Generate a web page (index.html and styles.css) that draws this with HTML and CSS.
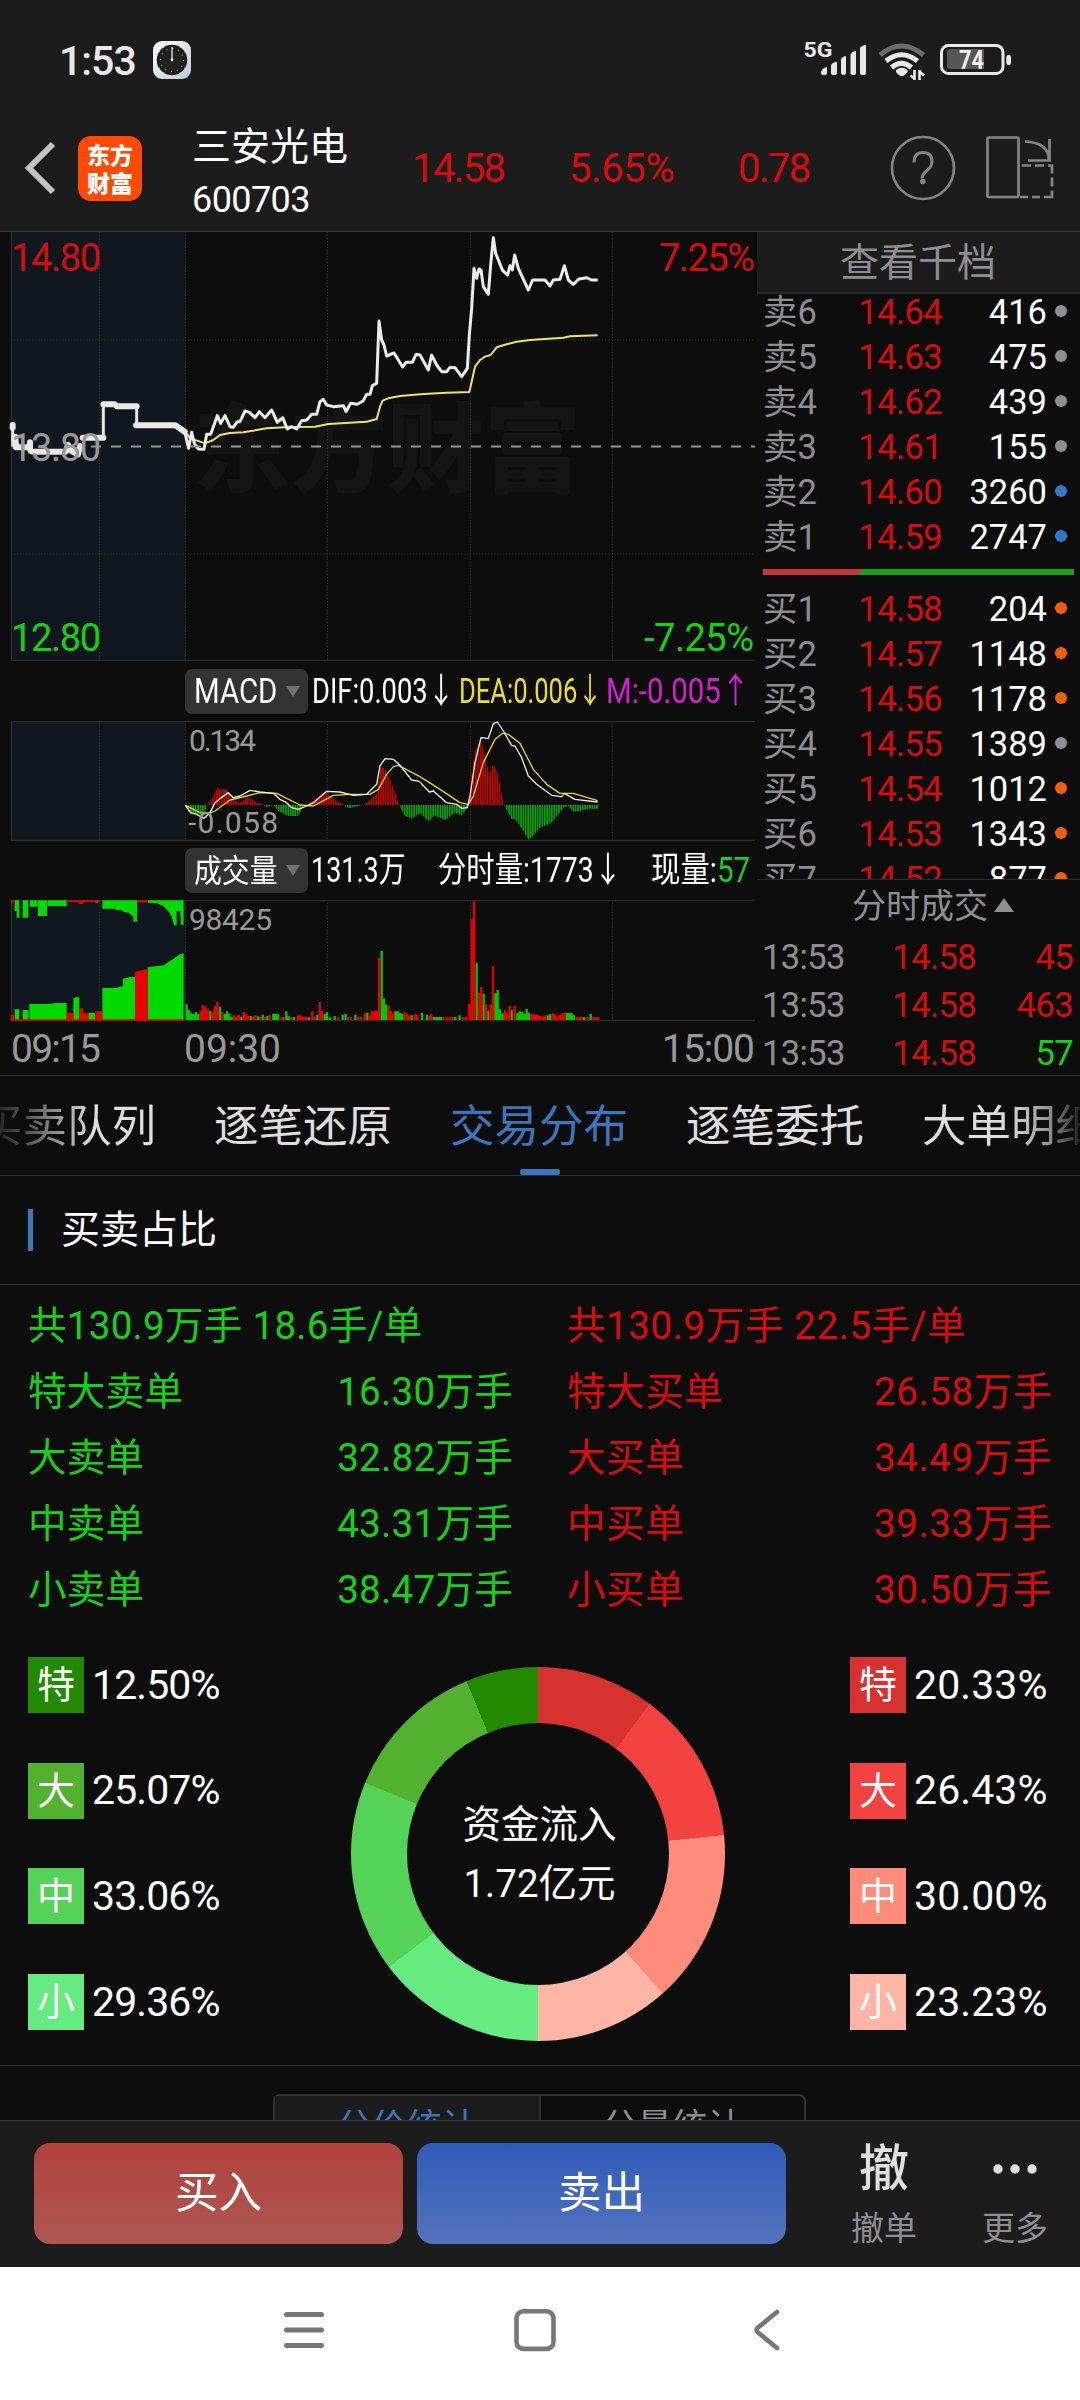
FILE: index.html
```html
<!DOCTYPE html>
<html lang="zh-CN">
<head>
<meta charset="utf-8">
<title>三安光电 600703</title>
<link rel="stylesheet" href="styles.css">
</head>
<body>
<div class="phone">
  <div class="status">
    <span class="time">1:53</span>
    <svg class="clock" width="38" height="38" viewBox="0 0 38 38">
      <defs><linearGradient id="cg" x1="0" y1="0" x2="1" y2="1"><stop offset="0" stop-color="#fff"/><stop offset="1" stop-color="#b9cad8"/></linearGradient></defs>
      <rect width="38" height="38" rx="9" fill="url(#cg)"/>
      <circle cx="19" cy="19" r="14.8" fill="#202020" stroke="#0c0c0c"/>
      <circle cx="19" cy="19" r="11.5" fill="none" stroke="#999" stroke-width="1.4" stroke-dasharray="1 5.02"/>
      <path d="M19 19V6" stroke="#fff" stroke-width="1.2"/><circle cx="19" cy="19" r="1.4" fill="#fff"/>
    </svg>
    <svg class="signals" width="218" height="54" viewBox="796 34 218 54">
      <text x="803.5" y="57" font-size="21" font-weight="700" fill="#e8e8e8" textLength="29" lengthAdjust="spacingAndGlyphs">5G</text>
      <g fill="#e8e8e8">
        <path d="M821 73v-1q1-4 6-5v6q0 2-3 2t-3-2zM831 73v-8q2-3 6-3v11q0 2-3 2t-3-2zM841 73v-14q2-3 5-3v17q0 2-2.500 2t-2.500-2zM850.500 73v-19q2-3 5.500-3v22q0 2-2.800 2t-2.700-2zM860 73v-25q2-3 6-3v28q0 2-3 2t-3-2z"/>
        <path d="M896 70q5.800-4.600 11.600 0v2q-3 4-5.800 4.500q-3-.5-5.800-4.500z"/>
      </g>
      <g fill="none" stroke="#e8e8e8" stroke-width="5">
        <path d="M880 55Q901.500 37 923.500 55" stroke="#6c6c6c"/>
        <path d="M886 61Q901.500 48.500 917.500 61"/><path d="M891.500 67.500Q901.500 59 911.500 67.500"/>
        <path d="M914.500 70v10M919.500 80v-10" stroke-width="2.600"/><path d="M910.500 75.500l4 3M919.500 71.500l4.500 4" stroke-width="2.500"/>
      </g>
      <rect x="941.500" y="45.500" width="61.500" height="28" rx="7" fill="none" stroke="#e8e8e8" stroke-width="3"/>
      <path d="M947 52q0-3 3-3h34v20h-34q-3 0-3-3z" fill="#565656"/>
      <rect x="1006.300" y="55" width="4.700" height="10" rx="2" fill="#e8e8e8"/>
      <text x="959" y="68.500" font-size="25" font-weight="700" fill="#f0f0f0" textLength="25" lengthAdjust="spacingAndGlyphs">74</text>
    </svg>
  </div>

  <header class="head">
    <svg class="back" width="34" height="56" viewBox="0 0 34 56"><path d="M29 4L5 28L29 52" fill="none" stroke="#c4c4c4" stroke-width="6"/></svg>
    <div class="logo"><span>东方</span><span>财富</span></div>
    <div class="names"><div class="nm">三安光电</div><div class="code">600703</div></div>
    <div class="quote q1">14.58</div><div class="quote q2">5.65%</div><div class="quote q3">0.78</div>
    <svg class="help" width="66" height="66" viewBox="0 0 66 66" fill="none" stroke="#858585">
      <circle cx="33" cy="33" r="31" stroke-width="2.600"/>
      <path d="M24 27.500q0-10 9-10t9 9q0 5-5 9t-4.800 8" stroke-width="3"/><circle cx="32.800" cy="46.500" r="2.800" fill="#858585" stroke="none"/>
    </svg>
    <svg class="rotate" width="70" height="66" viewBox="987 135 70 66" fill="none" stroke="#858585" stroke-width="2.700">
      <rect x="989.500" y="137.500" width="31" height="59.500" rx="1.500"/>
      <path d="M1027 141.500q24 1 24 19M1051.500 139v21.500h-21.500"/>
      <path d="M1024 165.500h9m4 0h9m4 0h4v8m0 4v9m0 4v6.500h-8m-4 0h-8m-4 0h-8"/>
    </svg>
  </header>

  <main class="market">
    <section class="charts">
      <svg class="price" width="757" height="430" viewBox="0 231 757 430">
        <rect x="11" y="232" width="174" height="428" fill="#10171e"/>
        <text class="mark" x="193" y="484" textLength="388">东方财富</text>
        <path class="grid" d="M99.500 232V660M185.500 232V660M327.500 232V660M470.500 232V660M612.500 232V660M11 340H755M11 554H755"/>
        <path class="edge" d="M11.500 232V660M11 660.500H755"/>
        <g transform="translate(0 225) scale(.33333)" fill="none" stroke-linejoin="round">
          <path d="M38 600V665M310 640V538M410 543V600" stroke="#e8e8e8" stroke-width="9"/>
          <path d="M38 600v8M46 635l2 32h38M90 652v20q0 8 12 8h96l6-20 10 18 20 10 6-25M248 638h62M310 538h35l6 6h59M408 601h118l16 11 12 8" stroke="#e8e8e8" stroke-width="18" stroke-linecap="round"/>
          <path stroke="#f0e070" stroke-width="6" d="M556 620L570 640 600 650 615 655 640 645 660 630 690 624 730 622 800 610 870 606 945 605 985 597 1100 590 1130 582 1140 545 1148 527 1165 520 1200 513 1270 507 1340 503 1408 501 1415 470 1425 425 1440 405 1455 395 1472 390 1490 367 1520 358 1550 350 1590 345 1690 338 1710 334 1793 331"/>
          <path stroke="#ececec" stroke-width="9" d="M554 620L566 670 575 622 583 655 595 672 612 673 620 628 632 628 652 572 662 595 675 572 690 605 700 607 712 590 720 590 735 558 748 562 765 578 778 560 795 578 815 555 832 592 848 578 862 612 875 605 890 612 905 587 920 585 935 568 950 568 960 530 970 523 980 540 1000 545 1030 542 1038 560 1052 535 1072 538 1090 527 1100 508 1110 508 1117 482 1130 475 1137 288 1145 345 1152 360 1160 393 1182 384 1208 426 1218 412 1237 412 1248 388 1260 390 1285 435 1295 390 1310 420 1325 440 1340 440 1350 427 1365 428 1385 455 1402 430 1408 330 1415 250 1422 130 1430 160 1437 132 1443 135 1450 185 1465 208 1472 120 1480 38 1487 85 1508 137 1523 150 1530 122 1537 135 1544 90 1555 130 1585 195 1598 165 1635 165 1650 183 1660 165 1680 163 1693 122 1705 165 1720 178 1737 162 1760 158 1775 165 1793 165"/>
        </g>
        <path d="M91 446.500H755" stroke="#969696" stroke-width="2" stroke-dasharray="10 10"/>
        <g font-size="38">
          <text class="up" x="11" y="271" textLength="90">14.80</text>
          <text class="up" x="659" y="271" textLength="96">7.25%</text>
          <text fill="#999" x="11" y="461" textLength="90">13.80</text>
          <text class="down" x="11" y="651" textLength="90">12.80</text>
          <text class="down" x="644" y="651" textLength="110">-7.25%</text>
        </g>
      </svg>
      <div class="legend">
        <div class="pill"><span class="fit p1">MACD</span><i></i></div>
        <span class="fit dif">DIF:0.003<b>↓</b></span><span class="fit dea">DEA:0.006<b>↓</b></span><span class="fit mm">M:-0.005<b>↑</b></span>
      </div>
      <svg class="macd" width="757" height="120" viewBox="0 720 757 120">
        <defs>
          <pattern id="rs" width="7.125" height="20" x="556" y="0" patternUnits="userSpaceOnUse"><rect width="4.800" height="20" fill="#c80000"/></pattern>
          <pattern id="gs" width="7.125" height="20" x="556" y="0" patternUnits="userSpaceOnUse"><rect width="4.800" height="20" fill="#00a800"/></pattern>
        </defs>
        <rect x="11" y="720" width="174" height="119" fill="#10171e"/>
        <path class="grid" d="M99.500 720V839M185.500 720V839M327.500 720V839M470.500 720V839M612.500 720V839"/>
        <path class="edge" d="M11.500 720V839M11 720.500H755M11 839.500H755"/>
        <g transform="translate(0 655) scale(.33333)">
          <path fill="url(#rs)" d="M622 447L635 430 652 395 662 400 680 400 695 430 720 440 745 423 765 437 790 445V447ZM920 447L945 430 980 405 1000 430 1035 447ZM1092 447L1130 415 1140 335 1152 335 1175 380 1197 447ZM1404 447L1410 400 1423 290 1443 250 1458 310 1468 355 1480 322 1495 360 1512 447Z"/>
          <path fill="url(#gs)" d="M556 447L570 475 612 475 622 447ZM790 447L800 453 820 447 835 465 865 480 895 480 912 447ZM1032 447L1045 457 1090 447ZM1198 447L1212 478 1235 488 1260 470 1288 497 1302 478 1335 492 1365 470 1385 478 1402 455V447ZM1512 447L1535 490 1545 488 1570 525 1587 553 1620 515 1655 500 1690 455 1705 450 1720 467 1740 465 1765 458 1795 458V447Z"/>
          <g fill="none" stroke-width="4" stroke-linejoin="round">
            <path stroke="#e3d51c" d="M556 448L600 470 625 473 645 465 690 432 740 420 780 410 830 412 900 447 940 450 1000 418 1050 415 1110 415 1135 400 1160 355 1180 332 1195 328 1260 362 1320 400 1380 440 1405 445 1420 420 1450 320 1485 250 1508 232 1525 235 1560 262 1600 340 1640 385 1680 412 1720 412 1793 434"/>
            <path stroke="#ececec" d="M556 448L572 470 590 475 612 487 630 470 645 440 660 428 685 410 700 425 720 420 750 403 780 408 820 412 840 430 860 440 875 455 895 460 920 450 940 440 980 406 1020 408 1060 418 1100 415 1130 385 1140 330 1155 308 1180 310 1200 328 1235 372 1258 376 1288 408 1300 405 1340 440 1370 445 1385 457 1402 455 1410 420 1425 320 1443 245 1465 247 1480 203 1492 198 1510 225 1535 268 1545 270 1565 305 1585 360 1610 385 1655 418 1685 422 1693 412 1725 430 1793 438"/>
          </g>
        </g>
        <g font-size="30" fill="#999"><text x="189" y="750" textLength="67">0.134</text><text x="188" y="832" textLength="90">-0.058</text></g>
      </svg>
      <div class="legend l2">
        <div class="pill"><span class="fit p2">成交量</span><i></i></div>
        <span class="fit v1">131.3万</span><span class="fit v2">分时量:1773<b>↓</b></span><span class="fit v3">现量:<em>57</em></span>
      </div>
      <svg class="vol" width="757" height="177" viewBox="0 899 757 177">
        <rect x="11" y="899" width="174" height="120" fill="#10171e"/>
        <path class="grid" d="M99.500 899V1019M185.500 899V1019M327.500 899V1019M470.500 899V1019M612.500 899V1019"/>
        <path class="edge" d="M11.500 899V1019M11 899.500H755M11 1019.500H755"/>
        <g transform="translate(0 655) scale(.33333)">
          <path fill="#00da00" d="M44 733H58V785H50V765H44ZM68 733H85V785H68ZM90 733H112V752H90ZM114 733H141V780H114ZM143 733H200V750H143ZM286 733H294V740H286ZM307 733V758H346V762H366L370 768 386 770 400 782V797H411V733ZM443 733V740L470 742 490 750 505 765 515 782 522 808H530V765H540L543 806H551V733Z"/>
          <path fill="#00da00" d="M44 1092V1060H58V1092ZM68 1092V1062H85V1092ZM88 1092V1044H150L165 1041H200V1092ZM220 1092V1028L226 1024H238V1092ZM265 1092V1070H285V1092ZM307 1092V996L350 995 369 990V968L390 963H405V1092ZM443 1092V934L490 928 515 912 540 895 551 892V1092Z"/>
          <path fill="#ea0000" d="M32 733H44V738H38V741H32ZM200 733H300V738H250V744H237V738H200ZM411 733H443V739H411ZM32 1092V1076H42V1092ZM200 1092V1070H220V1092ZM238 1092V1057H250V1072H265V1092ZM286 1092V1066H307V1092ZM405 1092V948L443 938V1092ZM32 1090H551V1094H32Z"/>
          <path fill="none" stroke="#00c800" stroke-width="7" d="M560 1092V1045M567 1092V1062M574 1092V1072M581 1092V1074M588 1092V1068M595 1092V1074M631 1092V1066M660 1092V1052M674 1092V1074M681 1092V1066M688 1092V1074M695 1092V1083M724 1092V1083M752 1092V1080M774 1092V1081M788 1092V1077M802 1092V1080M820 1092V1073M827 1092V1073M834 1092V1075M859 1092V1066M866 1092V1081M882 1092V1083M927 1092V1084M952 1092V1076M974 1092V1074M981 1092V1069M990 1092V1084M1004 1092V1080M1028 1092V1076M1037 1092V1074M1066 1092V1076M1102 1092V1070M1145 1092V884M1152 1092V1028M1159 1092V1047M1186 1092V1066M1193 1092V1066M1200 1092V1070M1207 1092V1074M1235 1092V1078M1266 1092V1070M1281 1092V1076M1302 1092V1083M1309 1092V1083M1316 1092V1083M1323 1092V1083M1366 1092V1083M1379 1092V1078M1430 1092V920M1451 1092V1014M1465 1092V1064M1486 1092V1012M1493 1092V1002M1500 1092V1060M1508 1092V1072M1535 1092V1062M1552 1092V1072M1559 1092V1066M1566 1092V1067M1573 1092V1074M1580 1092V1059M1587 1092V1071M1644 1092V1078M1651 1092V1075M1701 1092V1071M1708 1092V1071M1715 1092V1071M1722 1092V1078M1752 1092V1083M1772 1092V1074"/>
          <path fill="none" stroke="#e80000" stroke-width="7" d="M602 1092V1065M609 1092V1047M616 1092V1052M623 1092V1060M638 1092V1067M645 1092V1050M652 1092V1038M667 1092V1067M702 1092V1078M709 1092V1082M717 1092V1076M731 1092V1068M738 1092V1074M745 1092V1080M759 1092V1083M766 1092V1078M781 1092V1083M795 1092V1083M809 1092V1076M845 1092V1083M852 1092V1083M874 1092V1083M893 1092V1078M900 1092V1078M907 1092V1083M914 1092V1083M921 1092V1083M937 1092V1066M944 1092V1082M959 1092V1038M966 1092V1065M1014 1092V1083M1043 1092V1083M1052 1092V1083M1074 1092V1083M1083 1092V1083M1095 1092V1072M1109 1092V1078M1116 1092V1066M1123 1092V1066M1130 1092V1064M1137 1092V905M1166 1092V1049M1173 1092V1064M1180 1092V1072M1214 1092V1069M1222 1092V1075M1229 1092V1080M1245 1092V1075M1252 1092V1076M1288 1092V1080M1294 1092V1074M1330 1092V1083M1340 1092V1083M1350 1092V1083M1358 1092V1083M1390 1092V1083M1398 1092V1083M1408 1092V1043M1415 1092V790M1422 1092V736M1437 1092V1010M1444 1092V993M1458 1092V1045M1472 1092V1045M1479 1092V930M1515 1092V1063M1521 1092V1070M1529 1092V1050M1544 1092V1049M1594 1092V1075M1601 1092V1075M1608 1092V1075M1615 1092V1078M1622 1092V1080M1630 1092V1082M1637 1092V1078M1658 1092V1071M1665 1092V1075M1672 1092V1081M1680 1092V1076M1687 1092V1072M1694 1092V1071M1730 1092V1083M1738 1092V1083M1745 1092V1083M1762 1092V1083M1780 1092V1083M1788 1092V1083M1794 1092V1083"/>
        </g>
        <text x="189" y="929" font-size="30" fill="#999" textLength="83">98425</text>
        <g font-size="39" fill="#999"><text x="11" y="1061" textLength="90">09:15</text><text x="184" y="1061" textLength="97">09:30</text><text x="662" y="1061" textLength="93">15:00</text></g>
      </svg>
    </section>

    <aside class="book">
      <div class="book-head">查看千档</div>
      <div class="depth">
        <div class="lv"><span>卖6</span><span class="pr">14.64</span><span class="qt">416</span><i class="g"></i></div>
        <div class="lv"><span>卖5</span><span class="pr">14.63</span><span class="qt">475</span><i class="g"></i></div>
        <div class="lv"><span>卖4</span><span class="pr">14.62</span><span class="qt">439</span><i class="g"></i></div>
        <div class="lv"><span>卖3</span><span class="pr">14.61</span><span class="qt">155</span><i class="g"></i></div>
        <div class="lv"><span>卖2</span><span class="pr">14.60</span><span class="qt">3260</span><i class="b"></i></div>
        <div class="lv"><span>卖1</span><span class="pr">14.59</span><span class="qt">2747</span><i class="b"></i></div>
        <div class="ratio"></div>
        <div class="lv"><span>买1</span><span class="pr">14.58</span><span class="qt">204</span><i class="o"></i></div>
        <div class="lv"><span>买2</span><span class="pr">14.57</span><span class="qt">1148</span><i class="o"></i></div>
        <div class="lv"><span>买3</span><span class="pr">14.56</span><span class="qt">1178</span><i class="o"></i></div>
        <div class="lv"><span>买4</span><span class="pr">14.55</span><span class="qt">1389</span><i class="g"></i></div>
        <div class="lv"><span>买5</span><span class="pr">14.54</span><span class="qt">1012</span><i class="o"></i></div>
        <div class="lv"><span>买6</span><span class="pr">14.53</span><span class="qt">1343</span><i class="o"></i></div>
        <div class="lv"><span>买7</span><span class="pr">14.52</span><span class="qt">877</span><i class="o"></i></div>
      </div>
      <div class="deals">
        <div class="deals-head">分时成交<i></i></div>
        <div class="deal"><span>13:53</span><span class="up">14.58</span><span class="up">45</span></div>
        <div class="deal"><span>13:53</span><span class="up">14.58</span><span class="up">463</span></div>
        <div class="deal"><span>13:53</span><span class="up">14.58</span><span class="down">57</span></div>
      </div>
    </aside>
  </main>

  <nav class="tabs"><a>买卖队列</a><a>逐笔还原</a><a class="on">交易分布</a><a>逐笔委托</a><a>大单明细</a></nav>

  <h2 class="title">买卖占比</h2>

  <section class="dist">
    <div class="col down">
      <p class="sum">共130.9万手 18.6手/单</p>
      <p><span>特大卖单</span><span>16.30万手</span></p>
      <p><span>大卖单</span><span>32.82万手</span></p>
      <p><span>中卖单</span><span>43.31万手</span></p>
      <p><span>小卖单</span><span>38.47万手</span></p>
    </div>
    <div class="col up">
      <p class="sum">共130.9万手 22.5手/单</p>
      <p><span>特大买单</span><span>26.58万手</span></p>
      <p><span>大买单</span><span>34.49万手</span></p>
      <p><span>中买单</span><span>39.33万手</span></p>
      <p><span>小买单</span><span>30.50万手</span></p>
    </div>
  </section>

  <section class="flow">
    <ul>
      <li><b class="s1">特</b>12.50%</li><li><b class="s2">大</b>25.07%</li><li><b class="s3">中</b>33.06%</li><li><b class="s4">小</b>29.36%</li>
    </ul>
    <div class="ring"><div class="hole"><span>资金流入</span><span>1.72亿元</span></div></div>
    <ul class="buy">
      <li><b class="b1">特</b>20.33%</li><li><b class="b2">大</b>26.43%</li><li><b class="b3">中</b>30.00%</li><li><b class="b4">小</b>23.23%</li>
    </ul>
  </section>

  <section class="stats"><div class="seg"><span class="on">分价统计</span><span>分量统计</span></div></section>

  <footer class="trade">
    <button class="buy-btn">买入</button><button class="sell-btn">卖出</button>
    <div class="act"><strong>撤</strong><span>撤单</span></div>
    <div class="act more"><svg width="48" height="50" viewBox="0 0 48 50" fill="#e0e0e0"><circle cx="7" cy="26" r="4.700"/><circle cx="24" cy="26" r="4.700"/><circle cx="41" cy="26" r="4.700"/></svg><span>更多</span></div>
  </footer>

  <div class="sysnav">
    <svg width="40" height="44" viewBox="0 0 40 44" stroke="#777" stroke-width="5" stroke-linecap="round"><path d="M2.500 6.500h35M2.500 22h35M2.500 37.500h35"/></svg>
    <svg width="42" height="44" viewBox="0 0 42 44" fill="none" stroke="#777" stroke-width="4.600"><rect x="2.500" y="3.300" width="37" height="37.600" rx="7"/></svg>
    <svg width="28" height="44" viewBox="0 0 28 44" fill="none" stroke="#777" stroke-width="4.600" stroke-linecap="round" stroke-linejoin="round"><path d="M25 4L6 19.500Q3 22 6 24.500L25 40"/></svg>
  </div>
</div>
</body>
</html>
```
FILE: styles.css
```css
* { box-sizing: border-box; margin: 0; padding: 0; }
body { background: #0d0d0d; font-family: Roboto, "Noto Sans CJK SC", sans-serif; color: #fff; }
i, em { font-style: normal; }
svg { display: block; flex: none; }
.phone { width: 1080px; height: 2400px; overflow: hidden; display: flex; flex-direction: column; background: #0d0d0d; }
.phone > * { flex: none; }
.up { color: #d80c0c; fill: #d80c0c; }
.down { color: #18d018; fill: #18d018; }

.status { height: 120px; background: #1c1c1c; display: flex; align-items: center; padding: 0 66px 0 59px; }
.time { font-size: 41px; font-weight: 500; line-height: 60px; width: 94px; letter-spacing: -1px; color: #e8e8e8; margin-top: 2px; }
.signals { margin-left: auto; margin-top: 2px; }

.head { height: 112px; background: #1c1c1c; border-bottom: 1px solid #343434; display: flex; align-items: center; padding-bottom: 15px; }
.head > * { flex: none; }
.back { margin-left: 24px; }
.logo { width: 64px; height: 65px; margin-left: 20px; border-radius: 13px; background: #ff4a05; font: 900 23px/28px "Noto Sans CJK SC", sans-serif; display: flex; flex-direction: column; justify-content: center; align-items: center; }
.names { width: 270px; padding-left: 50px; }
.nm { font-size: 39px; line-height: 56px; height: 54px; white-space: nowrap; margin-top: 4px; }
.code { font-size: 36px; line-height: 54px; letter-spacing: -.6px; height: 48px; }
.quote { font-size: 40px; color: #d80c0c; letter-spacing: -1.6px; }
.q1 { width: 157px; } .q2 { width: 169px; letter-spacing: -.4px; } .q3 { width: 152px; }
.rotate { margin-left: 29px; }

.market { display: flex; height: 844px; border-bottom: 1px solid #2a2a2a; }
.charts { width: 757px; height: 844px; }
.price { margin-top: -1px; }
.mark { font-size: 97px; font-weight: 900; fill: #141414; }
.grid { stroke: #2c2e30; stroke-width: 1; stroke-dasharray: 1.500 1.500; fill: none; }
.edge { stroke: #2a2c2e; stroke-width: 1.400; fill: none; }
.legend { height: 60px; padding: 1px 0 0 185px; display: flex; align-items: center; }
.l2 { height: 59px; padding-bottom: 1px; }
.pill { width: 123px; height: 45px; background: #333; border-radius: 7px; display: flex; align-items: center; padding-left: 9px; flex: none; }
.pill i { border: 7px solid transparent; border-top: 11px solid #707070; border-bottom: 0; }
.fit { display: inline-block; white-space: nowrap; font-size: 35px; line-height: 44px; transform-origin: 0 50%; flex: none; }
.fit b { font-weight: 400; }
.p1 { width: 92px; transform: scaleX(.84); }
.p2 { width: 92px; font-size: 32px; transform: scaleX(.87); }
.dif { width: 147px; margin-left: 4px; transform: scaleX(.78); }
.dea { width: 147px; color: #ecdf2c; transform: scaleX(.73); }
.mm { color: #d61fd0; transform: scaleX(.84); }
.v1 { width: 127px; margin-left: 3px; transform: scaleX(.77); }
.v2 { width: 213px; transform: scaleX(.81); }
.v3 { transform: scaleX(.84); }
.v3 em { color: #18d018; }

.book { width: 323px; height: 844px; }
.book-head { height: 62px; background: #1c1c1c; border-bottom: 2px solid #2a2a2a; color: #8e8e93; font-size: 39px; line-height: 63px; padding-left: 83px; }
.depth { height: 585px; overflow: hidden; padding-left: 6px; }
.lv { height: 45px; line-height: 36px; font-size: 34.500px; color: #8e8e93; display: grid; grid-template-columns: 60px 119px 105px 12px; align-items: start; column-gap: 0; }
.lv span { white-space: nowrap; }
.lv .pr { color: #d80c0c; text-align: right; letter-spacing: -.6px; }
.lv .qt { color: #fff; text-align: right; }
.lv i { width: 12px; height: 12px; border-radius: 50%; margin: 11px 0 0 8px; }
.g { background: #8e8e93; } .b { background: #3478c8; } .o { background: #f0600c; }
.ratio { height: 6px; width: 311px; margin: 5px 0 16px 0; background: linear-gradient(135deg, #c23838 0 70px, #1c9c1c 71px); }
.deals { border-top: 1px solid #2a2a2a; color: #8e8e93; }
.deals-head { height: 53px; line-height: 53px; font-size: 34px; padding-left: 95px; display: flex; align-items: center; }
.deals-head i { border: 10px solid transparent; border-bottom: 14px solid #8e8e93; border-top: 0; margin: -3px 0 0 6px; }
.deal { height: 48px; line-height: 48px; font-size: 34.500px; display: grid; grid-template-columns: 92px 122px 1fr; padding: 0 7px 0 5px; letter-spacing: -.6px; }
.deal span + span { text-align: right; }

.tabs { height: 100px; border-bottom: 1px solid #2f2f2f; display: flex; gap: 58px; padding-left: 0; width: 1080px; overflow: hidden; font-size: 44.500px; line-height: 102px; color: #dedede; }
.tabs a { flex: none; width: 178px; white-space: nowrap; position: relative; height: 99px; }
.tabs a:first-child { margin-left: -22px; background: linear-gradient(90deg, #2a2a2a 22px, #555 50px, #dedede 115px); -webkit-background-clip: text; color: transparent; }
.tabs a:last-child { background: linear-gradient(90deg, #dedede 85px, #999 125px, #222 158px); -webkit-background-clip: text; color: transparent; }
.tabs .on { color: #3b76bf; }
.tabs .on::after { content: ""; position: absolute; left: 70px; bottom: 0; width: 40px; height: 6px; border-radius: 3px; background: #3b76bf; }

.title { height: 109px; border-bottom: 1px solid #2f2f2f; font-size: 39px; font-weight: 400; line-height: 108px; display: flex; align-items: center; padding-left: 28px; gap: 28px; }
.title::before { content: ""; width: 5px; height: 42px; background: #3b76bf; }

.dist { display: flex; gap: 54px; padding: 8px 28px 0; height: 371px; font-size: 38.500px; }
.col { width: 485px; letter-spacing: .3px; }
.col.up { letter-spacing: .6px; }
.col p { display: flex; justify-content: space-between; line-height: 66px; height: 66px; white-space: pre; }

.flow { height: 410px; display: flex; padding: 0 28px 0; border-bottom: 1px solid #333; }
.flow ul { list-style: none; width: 323px; flex: none; display: flex; flex-direction: column; gap: 49.700px; padding-top: 1px; }
.flow .buy { margin-left: 125px; width: 210px; }
.flow li { height: 56px; display: flex; align-items: center; gap: 8px; font-size: 41px; line-height: 57px; letter-spacing: -.9px; white-space: nowrap; }
.flow .buy li { letter-spacing: .1px; }
.flow b { width: 56px; height: 56px; flex: none; text-align: center; font-weight: 400; font-size: 38px; letter-spacing: 0; }
.s1 { background: #228a00; } .s2 { background: #52b12e; } .s3 { background: #55d359; } .s4 { background: #65eb80; }
.b1 { background: #d73230; } .b2 { background: #f34341; } .b3 { background: #ff8c7b; } .b4 { background: #ffb5a5; }
.ring { width: 374px; height: 374px; margin-top: 11px; flex: none; border-radius: 50%; display: grid; place-items: center;
  background: conic-gradient(#d73230 0 10.165%, #f34341 0 23.380%, #ff8c7b 0 38.380%, #ffb5a5 0 50%, #65eb80 0 64.680%, #55d359 0 81.210%, #52b12e 0 93.750%, #228a00 0); }
.hole { width: 262px; height: 262px; border-radius: 50%; background: #0d0d0d; display: flex; flex-direction: column; align-items: center; justify-content: center; font-size: 38.500px; line-height: 59px; padding-left: 3px; }

.stats { height: 54px; overflow: hidden; padding: 28px 0 0 273px; }
.seg { width: 533px; height: 80px; border: 2px solid #333; border-radius: 7px; display: flex; font-size: 35px; line-height: 64px; text-align: center; color: #8e8e93; }
.seg span { flex: 1; }
.seg .on { background: #1c1c1c; color: #3b76bf; border-right: 2px solid #333; }

.trade { height: 147px; background: #1c1c1c; border-top: 1px solid #343434; display: flex; padding: 22px 0 0 34px; gap: 14px; }
.trade button { width: 369px; height: 101px; border: 0; border-radius: 16px; color: #fff; font: 43.500px/101px Roboto, "Noto Sans CJK SC", sans-serif; }
.buy-btn { background: linear-gradient(#b2413d, #ad5753); }
.sell-btn { background: linear-gradient(#2f5bb8, #5373bc); }
.act { width: 70px; margin-left: 49px; display: flex; flex-direction: column; align-items: center; font-size: 33px; color: #8e8e93; }
.act strong { font-size: 50px; line-height: 52px; height: 63px; font-weight: 500; color: #e0e0e0; }
.act svg { height: 50px; margin-bottom: 13px; }
.act span { line-height: 46px; }
.act.more { margin-left: 47px; }

.sysnav { height: 134px; background: #fff; display: flex; align-items: center; padding: 0 0 9px 284px; }
.sysnav svg + svg { margin-left: 190px; }
.sysnav svg:last-child { margin-left: 196px; }
```
